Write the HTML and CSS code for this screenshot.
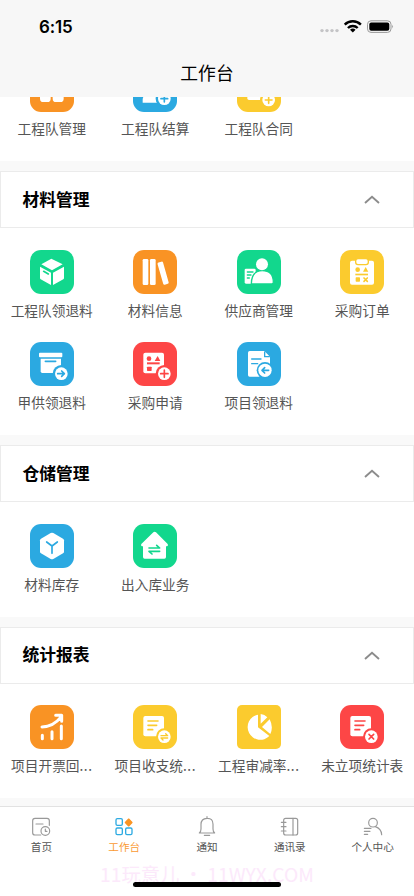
FILE: index.html
```html
<!DOCTYPE html>
<html lang="zh-CN">
<head>
<meta charset="utf-8">
<meta name="viewport" content="width=device-width, initial-scale=1">
<title>工作台</title>
<link rel="stylesheet" href="styles.css">
</head>
<body>
<div class="app">
  <header class="top">
    <div class="status">
      <span class="time">6:15</span>
      <svg class="signals" viewBox="0 0 74 14">
        <g fill="#c4c4c6"><circle cx="2" cy="10.6" r="1.7"/><circle cx="7" cy="10.6" r="1.7"/><circle cx="12" cy="10.6" r="1.7"/><circle cx="17" cy="10.6" r="1.7"/></g>
        <g fill="none" stroke="#000" stroke-width="2.4"><path d="M24.7 4.6a11.6 11.6 0 0 1 16.2 0"/><path d="M27.9 8a7 7 0 0 1 9.8 0"/></g>
        <path d="M32.8 12.6 30 9.8a4.2 4.2 0 0 1 5.600 0z"/>
        <rect x="47.500" y=".8" width="23.500" height="11.600" rx="3.500" fill="none" stroke="#999"/>
        <rect x="49.300" y="2.500" width="20" height="8.200" rx="1.900"/>
        <path d="M72.300 4.800q1.600 1.800 0 3.600z" fill="#888"/>
      </svg>
    </div>
    <h1>工作台</h1>
  </header>

  <main class="content">
    <section class="panel first">
      <div class="item">
        <svg class="icon orange" viewBox="0 0 132 132"><path d="M30 30h32v62q0 10-10 10H40q-10 0-10-10zM68 30h33v62q0 10-10 10H78q-10 0-10-10z"/></svg>
        <span>工程队管理</span>
      </div>
      <div class="item">
        <svg class="icon blue" viewBox="0 0 132 132"><circle cx="58" cy="50" r="20"/><path d="M29 104v-8q0-14 12-14h38v22z"/><circle class="cut" cx="94" cy="92" r="26"/><circle cx="94" cy="92" r="19"/><path class="line" d="M84 92h20M94 82v20"/></svg>
        <span>工程队结算</span>
      </div>
      <div class="item">
        <svg class="icon yellow" viewBox="0 0 132 132"><rect x="31" y="30" width="58" height="66" rx="5"/><circle class="cut" cx="95" cy="96" r="26"/><circle cx="95" cy="96" r="19"/><path class="line" d="M85 96h20M95 86v20"/></svg>
        <span>工程队合同</span>
      </div>
    </section>

    <h2 class="bar"><span>材料管理</span><svg class="chevron" viewBox="0 0 16 9"><path d="m1 8 7-6.200L15 8"/></svg></h2>
    <section class="panel">
      <div class="item">
        <svg class="icon green" viewBox="0 0 132 132"><path d="m64 26 34 17-32 18-32-18zM30 50l33 18v37L32 88q-2-1-2-4zM102 50 69 68v37l31-17q2-1 2-4z"/><path class="line" d="m41 64 14 8"/></svg>
        <span>工程队领退料</span>
      </div>
      <div class="item">
        <svg class="icon orange" viewBox="0 0 132 132"><rect x="29" y="27" width="17" height="78" rx="4"/><rect x="51" y="27" width="17" height="78" rx="4"/><rect x="82" y="35" width="17" height="69" rx="4" transform="rotate(-16 90.500 70)"/></svg>
        <span>材料信息</span>
      </div>
      <div class="item">
        <svg class="icon green" viewBox="0 0 132 132"><rect x="23" y="56" width="33" height="45" rx="4"/><path class="line thin" d="M31 66h17M31 75h11M31 84h6"/><path d="M43 102q0-40 33-40t33 35q0 5-5 5z" class="outlined"/><circle cx="75" cy="43" r="18"/></svg>
        <span>供应商管理</span>
      </div>
      <div class="item">
        <svg class="icon yellow" viewBox="0 0 132 132"><rect x="30" y="32" width="72" height="72" rx="6"/><rect class="outlined" x="47" y="26" width="38" height="18" rx="7"/><g class="cut"><circle cx="53" cy="59" r="7"/><path d="m77 51 8 14H69z"/><rect x="46" y="71" width="38" height="5"/><rect x="47" y="82" width="13" height="13" rx="2"/></g><path class="line" d="m72 84 10 10m0-10-10 10"/></svg>
        <span>采购订单</span>
      </div>
      <div class="item">
        <svg class="icon blue" viewBox="0 0 132 132"><rect x="27" y="32" width="70" height="14" rx="3"/><path d="M32 50h61v43H37q-5 0-5-5z"/><path class="line" d="M46 58h31"/><circle class="cut" cx="94" cy="95" r="26"/><circle cx="94" cy="95" r="19"/><path class="line" d="M83 95h20m-8-8 8 8-8 8"/></svg>
        <span>甲供领退料</span>
      </div>
      <div class="item">
        <svg class="icon red" viewBox="0 0 132 132"><rect x="31" y="32" width="62" height="62" rx="6"/><g class="cut"><circle cx="48" cy="50" r="7"/><path d="m74 42 8 15H65z"/><rect x="42" y="61" width="38" height="6"/><rect x="42" y="74" width="14" height="13" rx="2"/><circle cx="94" cy="95" r="26"/></g><circle cx="94" cy="95" r="19"/><path class="line" d="M83 95h22M94 84v22"/></svg>
        <span>采购申请</span>
      </div>
      <div class="item">
        <svg class="icon blue" viewBox="0 0 132 132"><path d="M38 27h44l17 17v60H38q-5 0-5-5V32q0-5 5-5z"/><path class="line thin" d="M83 30v14h14M44 51h28M44 65h18"/><circle class="cut" cx="84" cy="85" r="25"/><circle cx="84" cy="85" r="20"/><path class="line" d="M95 85H75m8-8-8 8 8 8"/></svg>
        <span>项目领退料</span>
      </div>
    </section>

    <h2 class="bar"><span>仓储管理</span><svg class="chevron" viewBox="0 0 16 9"><path d="m1 8 7-6.200L15 8"/></svg></h2>
    <section class="panel">
      <div class="item">
        <svg class="icon blue" viewBox="0 0 132 132"><path d="M62 27q4-2 8 0l29 17q3 2 3 5v34q0 3-3 5l-29 17q-4 2-8 0L33 88q-3-2-3-5V49q0-3 3-5z"/><path class="line" d="m50 54 16 12 16-12M66 66v22"/></svg>
        <span>材料库存</span>
      </div>
      <div class="item">
        <svg class="icon green" viewBox="0 0 132 132"><path d="M61 25q4-3 8 0l35 35q3 7-5 7v32q0 5-5 5H35q-5 0-5-5V67q-8 0-5-7z"/><path class="line" d="M48 72h32l-9-8M80 82H48l9 8"/></svg>
        <span>出入库业务</span>
      </div>
    </section>

    <h2 class="bar"><span>统计报表</span><svg class="chevron" viewBox="0 0 16 9"><path d="m1 8 7-6.200L15 8"/></svg></h2>
    <section class="panel last">
      <div class="item">
        <svg class="icon orange" viewBox="0 0 132 132"><g fill="none" stroke="#fff" stroke-width="9" stroke-linecap="round" stroke-linejoin="round"><path d="M36 66q35-2 56-29M77 31h18v18M37 91v10M66 80v21M94 63v38"/></g></svg>
        <span>项目开票回<i>...</i></span>
      </div>
      <div class="item">
        <svg class="icon yellow" viewBox="0 0 132 132"><rect x="31" y="33" width="62" height="61" rx="6"/><path class="line" d="M45 48h30M45 61h26M45 74h14"/><circle class="cut" cx="94" cy="95" r="25"/><circle cx="94" cy="95" r="19"/><path class="line thin" d="M84 92h20l-6-6M104 99H84l6 6"/></svg>
        <span>项目收支统<i>...</i></span>
      </div>
      <div class="item">
        <svg class="icon yellow square" viewBox="0 0 132 132"><path d="M63 29v38l34 26A38 38 0 1 1 63 29zM71 27q12 1 20 10L71 56zM98 43q12 23 2 44L75 66z"/></svg>
        <span>工程审减率<i>...</i></span>
      </div>
      <div class="item">
        <svg class="icon red" viewBox="0 0 132 132"><rect x="31" y="33" width="62" height="61" rx="6"/><path class="line" d="M45 48h30M45 61h26M45 74h14"/><circle class="cut" cx="94" cy="95" r="25"/><circle cx="94" cy="95" r="19"/><path class="line" d="m87 88 14 14m0-14-14 14"/></svg>
        <span>未立项统计表</span>
      </div>
    </section>
  </main>

  <footer class="bottom">
    <nav class="tabs">
      <a class="tab"><svg viewBox="0 0 66 66"><path d="M32 60H15q-7 0-7-7V17q0-7 7-7h36q7 0 7 7v14M18 27h21"/><circle cx="46" cy="48" r="13"/><path d="M46 42v7h5"/></svg><span>首页</span></a>
      <a class="tab active"><svg viewBox="0 0 66 66"><g stroke="#2fabe2" stroke-width="4"><rect x="9" y="11" width="19" height="20" rx="4"/><rect x="9" y="39" width="19" height="20" rx="4"/><rect x="38" y="39" width="19" height="20" rx="4"/></g><path d="m47 12 10 10.500-10 10.500-10-10.500z" fill="#fa9423" stroke="#fa9423"/></svg><span>工作台</span></a>
      <a class="tab"><svg viewBox="0 0 66 66"><path d="M33 5v5M10 54q5-4 5-12V28q0-17 18-18t18 18v14q0 8 5 12zM25 61h16"/></svg><span>通知</span></a>
      <a class="tab"><svg viewBox="0 0 66 66"><rect x="14" y="10" width="42" height="50" rx="6"/><path d="M42 10v50M7 22h14M7 35h14M7 48h14"/></svg><span>通讯录</span></a>
      <a class="tab"><svg viewBox="0 0 66 66"><circle cx="33" cy="23" r="13"/><path d="M40 35q18 6 19 24M7 40h20M7 49h17M7 58h10"/></svg><span>个人中心</span></a>
    </nav>
    <p class="watermark">11玩意儿 • 11WYX.COM</p>
    <div class="home-bar"></div>
  </footer>
</div>
</body>
</html>
```
FILE: styles.css
```css
* { box-sizing: border-box; }

body {
  margin: 0;
  font-family: "Noto Sans CJK SC", sans-serif;
  background: #f9f9f9;
}

.app {
  display: flex;
  flex-direction: column;
  height: 896px;
  overflow: hidden;
}

.top {
  flex: none;
  height: 97px;
  background: #f7f7f7;
}

.status {
  display: flex;
  justify-content: space-between;
  height: 58px;
  padding: 16px 20px 0 39px;
}

.time {
  font: 600 17px/22px Inter, sans-serif;
  letter-spacing: -0.2px;
}

.signals {
  width: 74px;
  height: 14px;
  margin-top: 4px;
}

h1 {
  margin: 0;
  font-size: 17.800px;
  font-weight: 400;
  line-height: 29px;
  text-align: center;
}

.content {
  flex: 1;
  min-height: 0;
  overflow: hidden;
}

.panel {
  display: grid;
  grid-template-columns: repeat(4, 1fr);
  grid-auto-rows: 92.300px;
  padding-top: 21.200px;
  padding-bottom: 0.700px;
  margin-bottom: 10px;
  background: #fff;
}

.first {
  padding-top: 0;
  margin-top: -29px;
}

.last { margin-bottom: 0; }

.item {
  display: flex;
  flex-direction: column;
  align-items: center;
  font-size: 13.700px;
  line-height: 20px;
  color: #555;
  white-space: nowrap;
}

.item i {
  font-style: normal;
  letter-spacing: 0.500px;
}

.icon {
  flex: none;
  width: 44px;
  height: 44px;
  margin-bottom: 6px;
  border-radius: 11px;
  background: var(--tint);
  fill: #fff;
}

.square { border-radius: 5px; }
.orange { --tint: #f99324; }
.blue { --tint: #2ba9e1; }
.yellow { --tint: #fbcb2e; }
.green { --tint: #12d78d; }
.red { --tint: #fd4646; }

.cut { fill: var(--tint); }

.line {
  fill: none;
  stroke: var(--tint);
  stroke-width: 5;
  stroke-linecap: round;
  stroke-linejoin: round;
}

.thin { stroke-width: 4; }

.outlined {
  stroke: var(--tint);
  stroke-width: 4;
}

.bar {
  display: flex;
  align-items: center;
  justify-content: space-between;
  height: 57.500px;
  margin: 0;
  padding: 0 33px 0 21.500px;
  border: 1.500px solid #ebebeb;
  background: #fff;
  font-size: 16.800px;
  font-weight: 700;
}

.bar span { padding-bottom: 2px; }

.chevron {
  width: 16px;
  height: 9px;
  fill: none;
  stroke: #8c8c8c;
  stroke-width: 1.900;
}

.bottom {
  position: relative;
  flex: none;
  height: 90px;
  border-top: 1.500px solid #e2e2e2;
  background: #fff;
}

.tabs { display: flex; }

.tab {
  display: flex;
  flex: 1;
  flex-direction: column;
  align-items: center;
  padding-top: 8px;
  color: #555;
  font-size: 10.600px;
  line-height: 16px;
}

.tab svg {
  width: 22px;
  height: 22px;
  margin-bottom: 2px;
  fill: none;
  stroke: #999;
  stroke-width: 3.500;
  stroke-linecap: round;
  stroke-linejoin: round;
}

.active { color: #fa9a32; }

.watermark {
  position: absolute;
  top: 53px;
  left: 0;
  width: 100%;
  margin: 0;
  color: #fce9fb;
  font-size: 19.300px;
  line-height: 28px;
  text-align: center;
  white-space: nowrap;
}

.home-bar {
  position: absolute;
  top: 75px;
  left: 133px;
  width: 148px;
  height: 5px;
  border-radius: 3px;
  background: #000;
}
```
